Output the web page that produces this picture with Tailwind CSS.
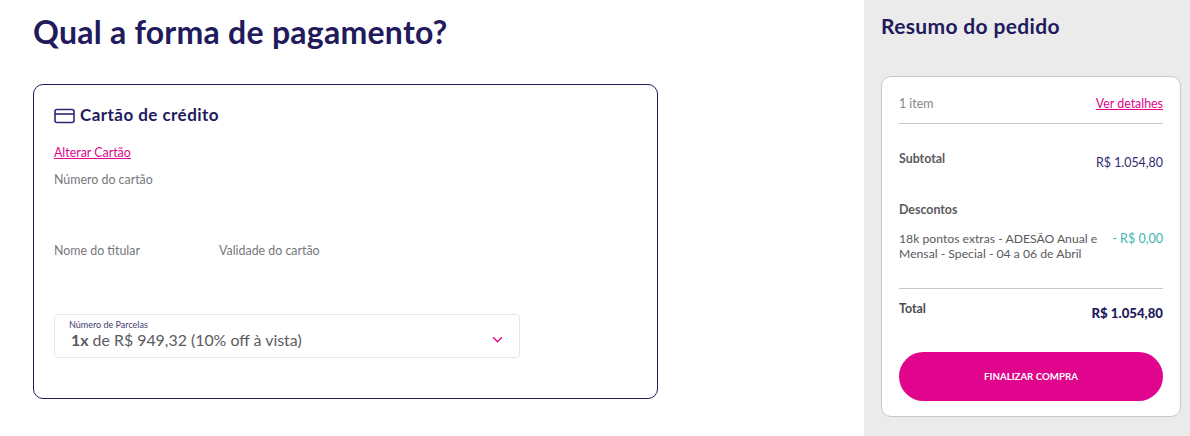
<!DOCTYPE html>
<html lang="pt-BR">
<head>
    <meta charset="UTF-8">
    <title>Pagamento</title>
    <script src="https://cdn.jsdelivr.net/npm/@tailwindcss/browser@4"></script>
</head>
<body class="bg-white font-['Lato',sans-serif] h-[436px] w-[1190px] overflow-hidden flex">

    <!-- pagamento -->
    <main class="w-[864px] pl-[33px]">
        <h1 class="text-[32px] leading-[36px] font-bold text-[#211a5c] pt-[14px] tracking-[0.25px]">Qual a forma de pagamento?</h1>

        <div class="mt-[34px] w-[625px] h-[315px] border border-[#211a5c] rounded-[10px] pt-[19px] pl-[20px]">
            <div class="flex items-center gap-[5px] h-[22px]">
                <svg class="w-[21px] h-[16px] mt-[2px]" viewBox="0 0 21 16" fill="none" stroke="#2f2870" stroke-width="1.6">
                    <rect x="1" y="1.5" width="19" height="13" rx="2"/>
                    <path d="M1 6h19"/>
                </svg>
                <h2 class="text-[17px] font-bold text-[#211a5c] tracking-[0.45px]">Cartão de crédito</h2>
            </div>
            <a href="#" class="block mt-[19px] text-[12.4px] leading-[16px] text-[#e0058c] underline">Alterar Cartão</a>
            <p class="mt-[11px] text-[12.4px] leading-[16px] text-[#77777a]">Número do cartão</p>
            <div class="flex mt-[55px] text-[12.4px] leading-[16px] text-[#77777a]">
                <p class="w-[165px]">Nome do titular</p>
                <p>Validade do cartão</p>
            </div>
            <div class="mt-[55px] w-[466px] h-[44px] border border-[#e6e6e6] rounded-[4px] pl-[14px] pr-[16px] flex items-center justify-between">
                <div class="-mt-[2px]">
                    <p class="text-[9px] leading-[10px] text-[#3f3a6b]">Número de Parcelas</p>
                    <p class="text-[15.9px] leading-[20px] text-[#5a5a5f] pl-[2px]"><strong class="font-bold">1x</strong> de R$ 949,32 (10% off à vista)</p>
                </div>
                <svg class="w-[11px] h-[7px] mt-[7px]" viewBox="0 0 12 8" fill="none" stroke="#e0058c" stroke-width="1.6">
                    <path d="M1 1.5l5 5 5-5"/>
                </svg>
            </div>
        </div>
    </main>

    <!-- resumo -->
    <aside class="flex-1 bg-[#ebebeb] pl-[17px] pr-[9px]">
        <h2 class="text-[21px] leading-[24px] font-bold text-[#211a5c] pt-[14px] tracking-[0.35px]">Resumo do pedido</h2>

        <div class="mt-[38px] h-[341px] bg-white border border-[#c8c8c8] rounded-[10px] px-[17px]">
            <div class="flex justify-between items-center h-[47px] pt-[9px] border-b border-[#c8c8c8] text-[12.4px]">
                <span class="text-[#85858a]">1 item</span>
                <a href="#" class="text-[#e0058c] underline">Ver detalhes</a>
            </div>
            <div class="flex justify-between mt-[27px] text-[12.4px] leading-[16px]">
                <span class="font-bold text-[#5a5a5f]">Subtotal</span>
                <span class="text-[#2f2870] mt-[4px]">R$ 1.054,80</span>
            </div>
            <p class="mt-[31px] text-[12.4px] leading-[16px] font-bold text-[#5a5a5f]">Descontos</p>
            <div class="flex justify-between mt-[13px] pb-[27px] border-b border-[#c8c8c8] text-[12.2px] leading-[15px]">
                <span class="w-[205px] text-[#5a5a5f]">18k pontos extras - ADESÃO Anual e Mensal - Special - 04 a 06 de Abril</span>
                <span class="text-[#3fb2b5] text-[12.5px]">- R$ 0,00</span>
            </div>
            <div class="flex justify-between mt-[12px] text-[12.4px] leading-[16px]">
                <span class="font-bold text-[#4a4a50]">Total</span>
                <span class="font-black text-[13.2px] text-[#211a5c] mt-[4px]">R$ 1.054,80</span>
            </div>
            <button class="mt-[31px] w-full h-[49px] rounded-full bg-[#e0058c] text-white text-[9.7px] font-bold">FINALIZAR COMPRA</button>
        </div>
    </aside>

</body>
</html>
